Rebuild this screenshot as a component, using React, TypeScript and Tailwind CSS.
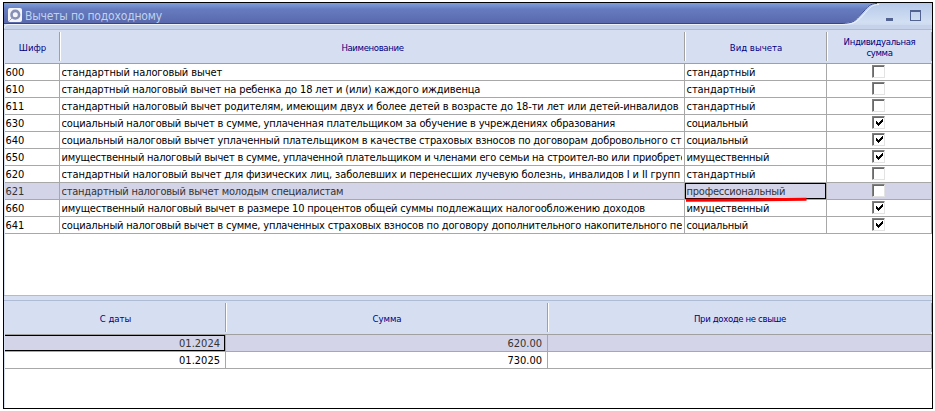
import clsx from 'clsx';

interface Deduction {
  code: string;
  name: string;
  kind: string;
  individual: boolean;
  spacing: string;
}

const deductions: Deduction[] = [
  { code: '600', name: 'стандартный налоговый вычет', kind: 'стандартный', individual: false, spacing: 'tracking-[-0.1px]' },
  { code: '610', name: 'стандартный налоговый вычет на ребенка до 18 лет и (или) каждого иждивенца', kind: 'стандартный', individual: false, spacing: 'tracking-[-0.14px]' },
  { code: '611', name: 'стандартный налоговый вычет родителям, имеющим двух и более детей в возрасте до 18-ти лет или детей-инвалидов', kind: 'стандартный', individual: false, spacing: 'tracking-[-0.13px]' },
  { code: '630', name: 'социальный налоговый вычет в сумме, уплаченная плательщиком за обучение в учреждениях образования', kind: 'социальный', individual: true, spacing: 'tracking-[-0.17px]' },
  { code: '640', name: 'социальный налоговый вычет уплаченный плательщиком в качестве страховых взносов по договорам добровольного ст', kind: 'социальный', individual: true, spacing: 'tracking-[-0.17px]' },
  { code: '650', name: 'имущественный налоговый вычет в сумме, уплаченной плательщиком и членами его семьи на строител-во или приобрете', kind: 'имущественный', individual: true, spacing: 'tracking-[-0.22px]' },
  { code: '620', name: 'стандартный налоговый вычет для физических лиц, заболевших и перенесших лучевую болезнь, инвалидов I и II групп', kind: 'стандартный', individual: false, spacing: 'tracking-[-0.13px]' },
  { code: '621', name: 'стандартный налоговый вычет молодым специалистам', kind: 'профессиональный', individual: false, spacing: 'tracking-[-0.22px]' },
  { code: '660', name: 'имущественный налоговый вычет в размере 10 процентов общей суммы подлежащих налогообложению доходов', kind: 'имущественный', individual: true, spacing: 'tracking-[-0.19px]' },
  { code: '641', name: 'социальный налоговый вычет в сумме, уплаченных страховых взносов по договору дополнительного накопительного пе', kind: 'социальный', individual: true, spacing: 'tracking-[-0.18px]' },
];

const amounts = [
  { date: '01.2024', sum: '620.00' },
  { date: '01.2025', sum: '730.00' },
];

const SELECTED = '621';

function HeaderCell({ children, last, tight }: { children: string; last?: boolean; tight?: boolean }) {
  return (
    <div
      className={clsx(
        'relative flex items-center justify-center whitespace-pre pt-px text-center text-[9.5px] leading-[11px] text-[#000080]',
        tight && 'tracking-[-0.35px]'
      )}
    >
      {children}
      <span className={clsx('absolute right-0 top-[2px] bottom-[2px] w-px bg-[#a0a0a0]', !last && 'shadow-[1px_0_0_white]')} />
    </div>
  );
}

function CheckBox({ checked }: { checked: boolean }) {
  return (
    <span className="flex size-[13px] items-center justify-center border border-t-[#808080] border-l-[#808080] border-r-[#e3e3e3] border-b-[#e3e3e3] bg-white shadow-[inset_1px_1px_0_#696969]">
      {checked && (
        <svg width="11" height="11" viewBox="0 0 11 11" shapeRendering="crispEdges">
          <path d="M3 4h1v1h1v1h1v-1h1v-1h1v-1h1v-1h1v3h-1v1h-1v1h-1v1h-1v1h-1v-1h-1v-1h-1z" fill="#000" />
        </svg>
      )}
    </span>
  );
}

export default function App() {
  return (
    <div className="h-[411px] w-[935px] bg-white pt-[2px] pl-[3px] font-['DejaVu_Sans_Condensed','DejaVu_Sans',sans-serif] text-[11px] text-black">
      <div className="flex h-[407px] w-[930px] flex-col overflow-hidden border border-black bg-white">
        {/* Title bar */}
        <div className="relative h-[27px] shrink-0 bg-[#c5d2e9]">
          <svg className="absolute inset-0" width="928" height="27">
            <defs>
              <linearGradient id="bar" x1="0" y1="0" x2="0" y2="1">
                <stop offset="0" stopColor="#7f9fda" />
                <stop offset="0.3" stopColor="#667cbf" />
                <stop offset="1" stopColor="#5a68ac" />
              </linearGradient>
              <linearGradient id="tab" x1="0" y1="0" x2="0" y2="1">
                <stop offset="0" stopColor="#b6caea" />
                <stop offset="0.7" stopColor="#d2dff3" />
                <stop offset="1" stopColor="#c5d2e9" />
              </linearGradient>
            </defs>
            <rect width="928" height="27" fill="url(#tab)" />
            <rect y="22" width="928" height="5" fill="#c5d2e9" />
            <path d="M0 0H873C866 0 864 3 860 7.5L855 13C851 17.5 848 20 838 20H0Z" fill="url(#bar)" />
            <path d="M873 0.5C866 0.5 864 3.5 860 8L855 13.5C851 18 848 20.5 838 20.5H0" fill="none" stroke="#35468f" />
            <path d="M875 1.5C868 1.5 866 4.5 861.5 9.5L856.5 15C852 19.5 848 21.5 838 21.5H4Q1 21.5 0 25" fill="none" stroke="#eef3fc" />
            <path d="M0 26.5H928" stroke="#adbbd5" />
          </svg>
          <div className="relative flex h-[21px] items-center gap-[3px] pl-[4px] pt-[3px]">
            <svg width="14" height="14" viewBox="0 0 14 14">
              <rect width="14" height="14" rx="2" fill="#f4f6fb" />
              <circle cx="7.3" cy="6.7" r="3.8" fill="none" stroke="#8791b5" strokeWidth="2.6" />
              <path d="M1.5 12.5 4 10" stroke="#e48a7c" />
            </svg>
            <span className="pt-[2px] text-[12px] leading-[14px] tracking-[-0.18px] text-[#c0d3f0]">Вычеты по подоходному</span>
          </div>
          <span className="absolute left-[882px] top-[15px] h-[3px] w-[7px] bg-[#526291]" />
          <span className="absolute left-[906px] top-[7px] h-[11px] w-[11px] border border-t-2 border-[#526291]" />
        </div>

        {/* Deductions */}
        <div className="flex h-[265px] shrink-0 flex-col border-l border-[#d6dff2]">
          <div className="grid h-[34px] shrink-0 grid-cols-[55px_625px_142px_105px] border-b border-[#a0a0a0] bg-[#d6dff2]">
            <HeaderCell>Шифр</HeaderCell>
            <HeaderCell tight>Наименование</HeaderCell>
            <HeaderCell>Вид вычета</HeaderCell>
            <HeaderCell last tight>{'Индивидуальная\nсумма'}</HeaderCell>
          </div>
          {deductions.map((d) => {
            const selected = d.code === SELECTED;
            return (
              <div
                key={d.code}
                className={clsx(
                  'grid h-[17px] shrink-0 grid-cols-[55px_625px_142px_105px] border-b border-[#a8a8a8] leading-[17px] whitespace-nowrap',
                  selected && 'bg-[#d3d4e8] text-[#333]'
                )}
              >
                <div className="border-r border-[#a8a8a8] pl-[0.5px]">{d.code}</div>
                <div className="h-[16px] border-r border-[#a8a8a8] pl-[1.5px] pr-[2px]">
                  <div className={clsx('h-[16px] overflow-hidden', d.spacing)}>{d.name}</div>
                </div>
                <div
                  className={clsx(
                    'relative h-[16px] border-r border-[#a8a8a8] pl-[1.5px]',
                    d.kind === 'стандартный' ? 'tracking-[-0.05px]' : 'tracking-[-0.22px]'
                  )}
                >
                  {d.kind}
                  {selected && (
                    <>
                      <span className="absolute left-0 top-0 h-[16px] w-[141px] border border-black" />
                      <svg className="absolute left-0 top-[14px] z-10" width="123" height="6">
                        <path d="M1 3.2 60 3 121.5 2.2" fill="none" stroke="#f00" strokeWidth="3" />
                      </svg>
                    </>
                  )}
                </div>
                <div className="flex h-[16px] items-start justify-center border-r border-[#a8a8a8] pt-px pr-px">
                  <CheckBox checked={d.individual} />
                </div>
              </div>
            );
          })}
        </div>

        {/* Splitter */}
        <div className="h-[6px] shrink-0 border-y border-[#adbbd5] bg-[#d6dff2]" />

        {/* Amounts */}
        <div className="flex grow flex-col border-l border-[#d6dff2]">
          <div className="grid h-[34px] shrink-0 grid-cols-[221px_322px_384px] border-b border-[#a0a0a0] bg-[#d6dff2]">
            <HeaderCell>С даты</HeaderCell>
            <HeaderCell>Сумма</HeaderCell>
            <HeaderCell last tight>При доходе не свыше</HeaderCell>
          </div>
          {amounts.map((a, i) => (
            <div
              key={a.date}
              className={clsx(
                'grid h-[17px] shrink-0 grid-cols-[221px_322px_384px] border-b border-[#a8a8a8] text-right leading-[17px]',
                i === 0 && 'bg-[#d3d4e8] text-[#333]'
              )}
            >
              <div className="relative h-[16px] border-r border-[#a8a8a8] pr-[5px]">
                {a.date}
                {i === 0 && <span className="absolute left-0 top-0 h-[16px] w-[220px] border border-l-0 border-black" />}
              </div>
              <div className="h-[16px] border-r border-[#a8a8a8] pr-[5px]">{a.sum}</div>
              <div className="h-[16px] border-r border-[#a8a8a8]" />
            </div>
          ))}
        </div>
      </div>
    </div>
  );
}
